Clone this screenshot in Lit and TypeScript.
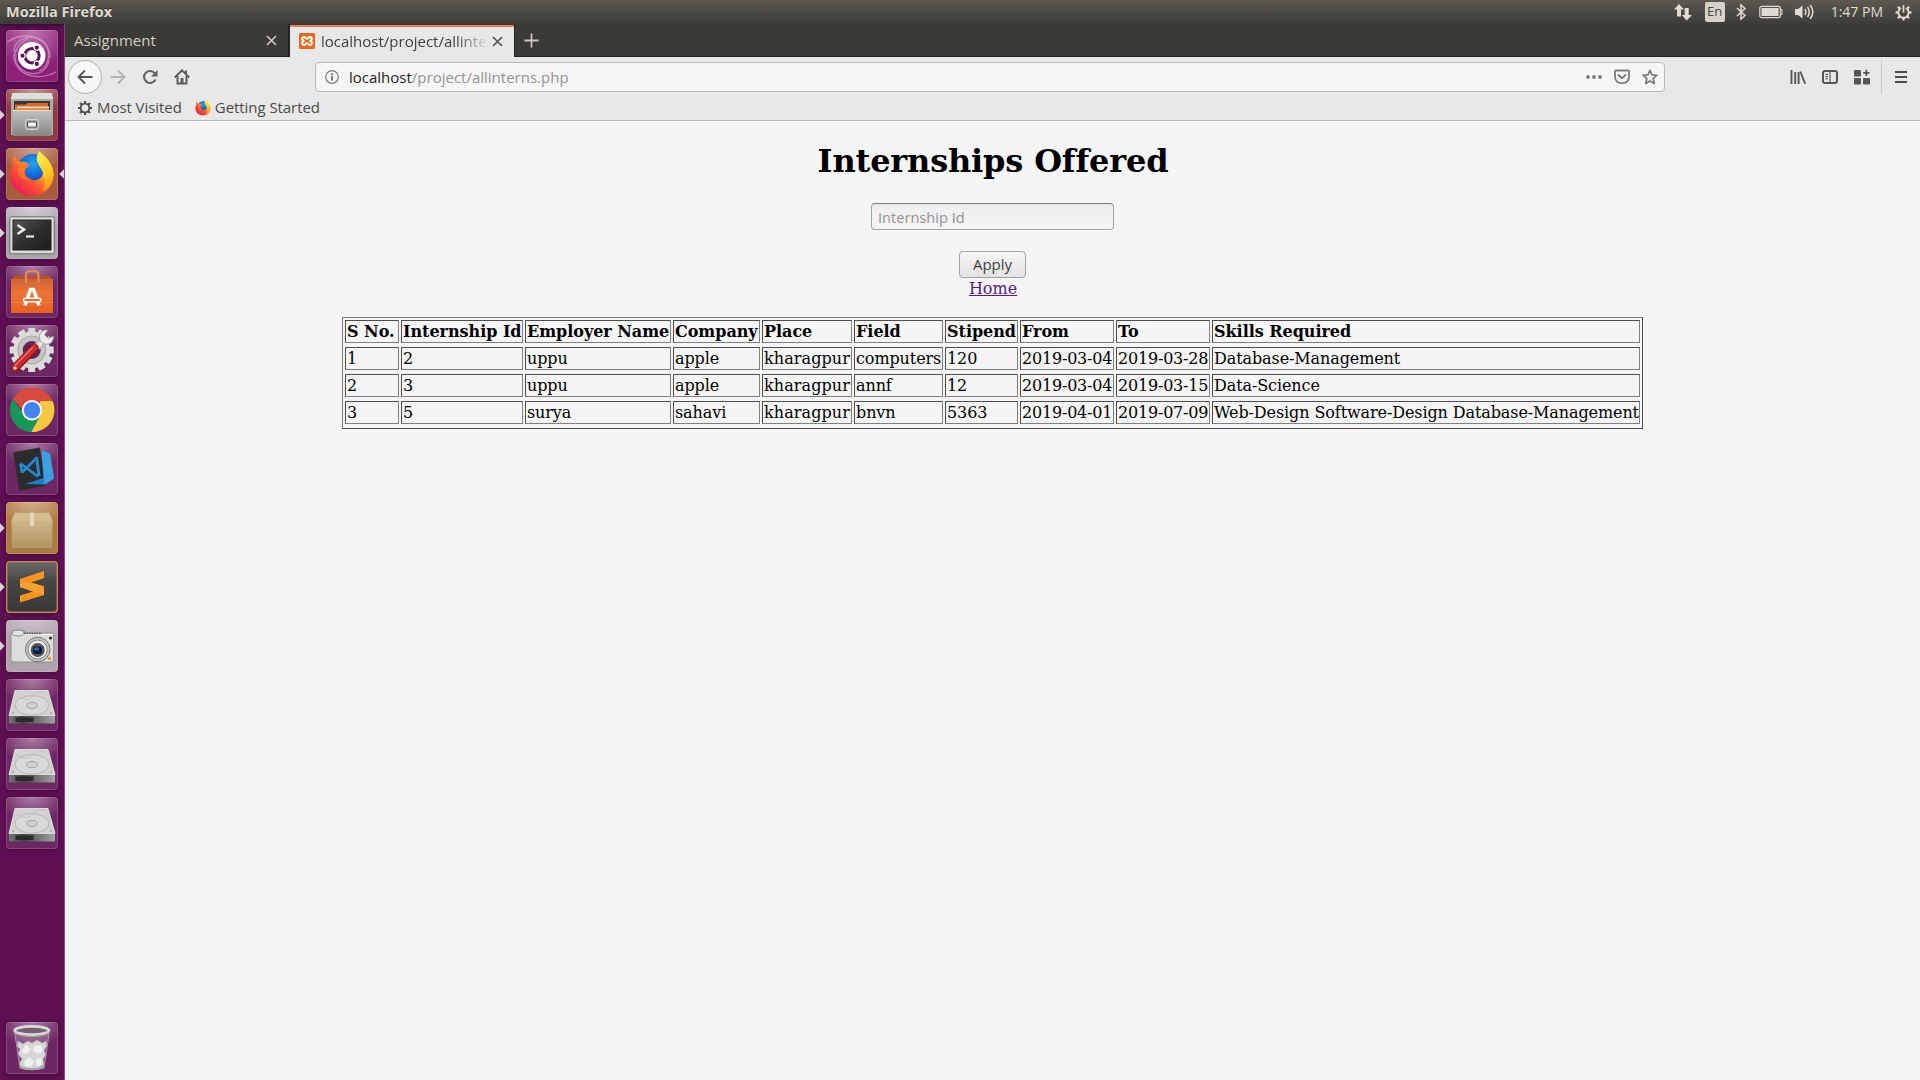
import { LitElement, html, css, svg } from "lit";
import { classMap } from "lit/directives/class-map.js";

const gearTeeth = (cx: number, cy: number, r: number, len: number, w: number, n: number, fill: string) =>
  Array.from({ length: n }, (_, i) => svg`<rect x=${cx - w / 2} y=${cy - r - len} width=${w} height=${len + 2} rx="0.6" fill=${fill} transform="rotate(${(360 / n) * i} ${cx} ${cy})"/>`);

const foxLogo = svg`
  <defs>
    <linearGradient id="fx-a" x1="0.85" y1="0.1" x2="0.15" y2="0.9"><stop offset="0" stop-color="#fff04a"/><stop offset="0.35" stop-color="#ffb01e"/><stop offset="0.6" stop-color="#ff5a2e"/><stop offset="1" stop-color="#ed1a55"/></linearGradient>
    <radialGradient id="fx-b" cx="0.5" cy="0.3" r="0.7"><stop offset="0" stop-color="#1fa5f5"/><stop offset="0.6" stop-color="#1160d8"/><stop offset="1" stop-color="#2b2a86"/></radialGradient>
    <linearGradient id="fx-c" x1="0" y1="0" x2="0.3" y2="1"><stop offset="0" stop-color="#fff458"/><stop offset="0.7" stop-color="#ffc823"/><stop offset="1" stop-color="#ff9a1f"/></linearGradient>
  </defs>
  <circle cx="27" cy="22" r="16" fill="url(#fx-b)"/>
  <path d="M8 8 C10 10 11 13 15 14 C19 13 20 15 23 16.500 C23 19 20 20 19 22 C18 25 19 29 24 31 C30 34 36 31 37 25 C38 18 34 14 31 11 L33 4 C38 9 47 15 47.5 27 C47 40 38 47.5 26 47.5 C14 47.5 4.5 40 4 27 C4 22 5 20 7 17 C6 14 6.500 10 8 8Z" fill="url(#fx-a)"/>
  <path d="M33 3 C40 9 48 16 47.500 27 C47 35 42 41 36 43 C40 37 39 32 38 28 C37 20 29 16 31 8Z" fill="url(#fx-c)"/>
  <path d="M12 19 C16 14 20 15.500 23 16.500 C23 19 20 20 19 22 C18 25 19 29 25 31 C20 34 14 30 12 25Z" fill="#ff7a25" opacity=".75"/>`;

const drive = svg`
  <path d="M9 11.500H42L49 36V43.500Q49 44.500 48 44.500H4Q3 44.500 3 43.500V36Z" fill="#3b3b39"/>
  <path d="M9 11.500H42L49 36.500H3Z" fill="#d2d2d0" stroke="#f0f0ee" stroke-width=".8"/>
  <path d="M3 37H49V43.500Q49 44.500 48 44.500H4Q3 44.500 3 43.500Z" fill="url(#dv)"/>
  <rect x="9.500" y="38.500" width="18" height="4.500" fill="#2b2b2a"/>
  <ellipse cx="26" cy="26.500" rx="17" ry="9.800" fill="#d9d9d7" stroke="#b2b2b0" stroke-width=".9"/>
  <ellipse cx="26" cy="26.500" rx="5.500" ry="3.200" fill="#cfcfcd" stroke="#a4a4a2"/>
  <path d="M10 17Q22 24 27 17T40 14" fill="none" stroke="#bcbcba" stroke-width=".8"/>
  <circle cx="7" cy="34" r=".8" fill="#888"/><circle cx="45" cy="34" r=".8" fill="#888"/>
  <defs><linearGradient id="dv"><stop offset="0" stop-color="#777"/><stop offset=".3" stop-color="#444"/><stop offset="1" stop-color="#a4a4a2"/></linearGradient></defs>`;

const art: Record<string, unknown> = {
  ubuntu: svg`
    <g fill="none" stroke="#e6b6dc" stroke-width="1.300" opacity=".55"><path d="M8 22C8 8 26 3 37 12C47 21 43 36 33 41"/><path d="M1 12C20 0 44 6 44 28"/><path d="M43 30C40 47 20 47 12 36C4 24 13 12 22 9"/><path d="M50 42C30 52 8 45 8 24"/></g>
    <circle cx="26" cy="26.500" r="14.500" fill="#47093d" opacity=".3"/>
    <circle cx="25.700" cy="25.700" r="13.800" fill="#fff"/>
    <circle cx="26" cy="25.700" r="7.200" fill="none" stroke="#5e1052" stroke-width="3"/>
    <g stroke="#fff" stroke-width="1.200" fill="#5e1052"><circle cx="16.500" cy="25.700" r="2.700"/><circle cx="30.800" cy="17.600" r="2.700"/><circle cx="30.800" cy="33.900" r="2.700"/></g>`,
  files: svg`
    <defs><linearGradient id="fl" x2="0" y2="1"><stop offset="0" stop-color="#c2c2c0"/><stop offset="1" stop-color="#858583"/></linearGradient></defs>
    <path d="M6 5Q6 4 7 4H45Q46 4 46.500 5L47 10V46H5V10Z" fill="#adadab"/><path d="M6.500 4H45.500L47 10H5Z" fill="#dededc"/>
    <rect x="8" y="12" width="36" height="10" fill="#353533"/>
    <path d="M9 15.500H20L21 14H42V22H9Z" fill="#d66a2a"/><rect x="11" y="17.500" width="32" height="1.500" fill="#f8dcc0"/><rect x="9" y="19" width="34" height="3" fill="#ef8a3c"/>
    <rect x="6.500" y="21" width="39" height="26" rx="1" fill="url(#fl)"/><path d="M7 21.500H45" stroke="#dcdcda"/>
    <rect x="19.500" y="30.500" width="13" height="10" rx="2" fill="#aaa" stroke="#d4d4d2"/><rect x="21.500" y="33" width="9" height="5" rx="1" fill="#fff" stroke="#4b4b49" stroke-width="1.200"/>`,
  firefox: foxLogo,
  terminal: svg`
    <defs><linearGradient id="tm" x1="0" y1="0" x2="1" y2="1"><stop offset="0" stop-color="#565654"/><stop offset=".5" stop-color="#2f2f2d"/><stop offset="1" stop-color="#1d1d1c"/></linearGradient></defs>
    <rect x="3.800" y="9.800" width="44.500" height="37" rx="1.500" fill="#dcdcda" stroke="#6a6a68"/><rect x="7" y="13" width="38" height="30" fill="url(#tm)" stroke="#222"/>
    <path d="M11.500 18L18 22.500L11.500 27" fill="none" stroke="#e8e8e6" stroke-width="2.600"/><path d="M20 29.500H28" stroke="#e8e8e6" stroke-width="2.200"/>`,
  software: svg`
    <defs><linearGradient id="sw" x2="0" y2="1"><stop offset="0" stop-color="#ce6332"/><stop offset=".4" stop-color="#ee7438"/><stop offset="1" stop-color="#e66220"/></linearGradient></defs>
    <path d="M9 9.500H43L47 14H5Z" fill="#b4542c"/><rect x="5" y="13" width="42" height="34" fill="url(#sw)"/>
    <path d="M20 17V9Q20 5.200 24 5.200H28.500Q32.500 5.200 32.500 9V17" fill="none" stroke="#dd8861" stroke-width="2.300"/>
    <path d="M5 36.500H47" stroke="#ef8b5a" stroke-width=".7"/>
    <g fill="none" stroke="#fff" stroke-width="3.600"><path d="M19 39.500L24.500 23.500H27.500L33 39.500"/></g><rect x="17.500" y="32.300" width="17.500" height="3.400" rx="1.700" fill="#e96c2c" stroke="#fff" stroke-width="1.500"/>`,
  settings: svg`
    ${gearTeeth(25.7, 25, 17.5, 4.5, 7, 12, "#dcdcda")}<circle cx="25.700" cy="25" r="18.500" fill="#dcdcda"/><circle cx="25.700" cy="25" r="14" fill="#c5c5c3" stroke="#a4a4a2"/><circle cx="25.700" cy="25" r="9" fill="#5f2357"/>
    <path d="M31 22L40 13" stroke="#b9b9b7" stroke-width="8"/><path d="M30 23L39 14" stroke="#ececea" stroke-width="4"/>
    <path d="M35 17C31 11 35 4 42 5L38.500 9.500L42 13.500L47.500 11C48 18 41 22 35 17Z" fill="#ededeb" stroke="#8f8f8d" stroke-width=".8"/>
    <path d="M9 43L28.500 23" stroke="#8c1515" stroke-width="8.500" stroke-linecap="round"/><path d="M9 42.500L28.500 22.500" stroke="#c92b2b" stroke-width="6.500" stroke-linecap="round"/><path d="M9 40.500L27 22" stroke="#ef7474" stroke-width="1.300"/><circle cx="9" cy="43" r="1.600" fill="#f5e8e8"/>`,
  chrome: svg`
    <path d="M26 26L6.900 15A22 22 0 0 1 45.100 15Z" fill="#d9493a"/><path d="M26 4A22 22 0 0 1 46.500 17H26L20 30L6.900 15A22 22 0 0 1 26 4Z" fill="#d84b3c"/>
    <path d="M46.500 17A22 22 0 0 1 25 48L34.500 31L34 17Z" fill="#f6c83e"/>
    <path d="M6.900 15A22 22 0 0 0 25 48L34 32L18 31Z" fill="#169658"/>
    <circle cx="26" cy="26.300" r="10.300" fill="#f4f4f4"/><circle cx="26" cy="26.300" r="8.200" fill="#4484ee"/>`,
  code: svg`
    <path d="M7.300 9.300L34 4.500L39 43L13.300 47.500Z" fill="#2c2c2e"/><path d="M35.500 7.500L44 10.500L48 35.500L38.500 41.500L19 41L37.500 35Z" fill="#1683cc"/><path d="M35.500 7.500L44 10.500L48 35.500L38.500 41.500Z" fill="#3ba0e0"/>
    <path d="M14.500 20.500L32 33.500M31 14.500L16 29.500M14.500 20.500L16 29.500" fill="none" stroke="#2389cf" stroke-width="2.800"/><path d="M30.500 14L33 33" stroke="#2389cf" stroke-width="3"/>`,
  archive: svg`
    <defs><linearGradient id="bx" x2="0" y2="1"><stop offset="0" stop-color="#cdb587"/><stop offset="1" stop-color="#b1945f"/></linearGradient></defs>
    <path d="M9 10.500H43L47 19.500V46.500Q47 47.500 46 47.500H6Q5 47.500 5 46.500V19.500Z" fill="#8c7040"/><path d="M9 10.500H43L47 19.500H5Z" fill="#d3bd90"/><rect x="5.500" y="19" width="41" height="27.500" fill="url(#bx)"/><path d="M24.500 10.500H27.500L28 24H24Z" fill="#e6dabb"/>`,
  sublime: svg`
    <defs><linearGradient id="sb" x2="0" y2="1"><stop offset="0" stop-color="#686868"/><stop offset=".4" stop-color="#444"/><stop offset="1" stop-color="#393939"/></linearGradient></defs>
    <rect x="1.500" y="1.500" width="49" height="49" rx="3" fill="url(#sb)"/><path d="M14 18L38 10V17L25 21.500L38 25.500V34L14 41.500V34.500L27 30.500L14 26Z" fill="#f8941e"/><path d="M14 26L27 30.500L38 34V25.500L25 21.500L14 22Z" fill="#f9a031"/>`,
  camera: svg`
    <rect x="9" y="10.500" width="10" height="5" rx="2.500" fill="#eee" stroke="#777" stroke-width=".8"/><rect x="5" y="13" width="42.500" height="29" rx="2.500" fill="#dcdcda" stroke="#878785" stroke-width=".8"/><path d="M6 14.500H47" stroke="#fff"/><path d="M18 13.500H36" stroke="#555" stroke-width="1.500" stroke-dasharray="1.500 1"/>
    <ellipse cx="12" cy="13" rx="6" ry="3" fill="#e5e5e3" stroke="#777" stroke-width=".8"/><circle cx="44.500" cy="18" r="1.500" fill="#222"/>
    <circle cx="31.700" cy="29.500" r="12.300" fill="#c4c4c2" stroke="#777" stroke-width="1"/><circle cx="31.700" cy="29.500" r="9.500" fill="#efefed" stroke="#888"/><circle cx="31.700" cy="30" r="7" fill="#555553"/><rect x="27" y="26.500" width="9" height="7.500" rx="2.500" fill="#0a1940"/><rect x="28" y="27.500" width="5" height="3" rx="1" fill="#3565a9"/><rect x="42" y="37" width="3" height="3" fill="#f29a1d"/>`,
  drive,
  trash: svg`
    <path d="M9 12H43L38 46Q26 50 14 46Z" fill="#c8b0c4" opacity=".3"/>
    <g fill="#d6d6d4" stroke="#a9a9a7" stroke-width=".5"><path d="M12 19L17 22L22 19L26 21L31 18L36 21L40 19L41 24L38 28L40 33L37 37L38 43L33 46L26 47L17 46L13 42L16 37L12 32L14 27L11 24Z"/><path d="M16 28L20 23L25 27L22 31L17 32ZM28 24L35 23L37 29L32 32L27 29ZM18 40L23 35L28 39L25 45L19 44ZM30 37L36 36L35 43L30 44Z" fill="#f0f0ee" stroke="none"/></g>
    <path d="M9 12L14 46Q26 49.500 38 46L43 12" fill="none" stroke="#aa95a7" stroke-width="1"/><path d="M14 45Q26 49.500 38 45" stroke="#a5a5a3" stroke-width="2" fill="none"/>
    <ellipse cx="25.800" cy="8.500" rx="17" ry="4.200" fill="#716070" stroke="#d9d9d7" stroke-width="2.800"/><path d="M8 11.500Q26 18 43.500 11.500" stroke="#9d9d9b" fill="none"/>`,
};

const launchers = [
  { art: "ubuntu", tone: "t-ubuntu" },
  { art: "files", tone: "t-files", run: true },
  { art: "firefox", tone: "t-firefox", run: true, focus: true },
  { art: "terminal", tone: "t-terminal", run: true },
  { art: "software", tone: "" },
  { art: "settings", tone: "" },
  { art: "chrome", tone: "" },
  { art: "code", tone: "" },
  { art: "archive", tone: "t-archive", run: true },
  { art: "sublime", tone: "t-sublime", run: true },
  { art: "camera", tone: "t-camera", run: true },
  { art: "drive", tone: "" },
  { art: "drive", tone: "" },
  { art: "drive", tone: "" },
  { art: "trash", tone: "", last: true },
];

class UnityLauncher extends LitElement {
  static styles = css`
    :host { display: flex; flex-direction: column; gap: 7px; box-sizing: border-box; padding: 6px 0 6px 0; background: linear-gradient(#3f0a37, #5e1052 5px, #5f1053); border-right: 1px solid #84457b; }
    .slot { display: flex; align-items: center; height: 52px; }
    .last { margin-top: auto; }
    .side { flex: none; width: 6px; height: 10px; }
    .tile { width: 52px; height: 52px; border-radius: 4px; box-sizing: border-box; background: radial-gradient(ellipse 34px 24px at 50% 0, #ad7da5, transparent), #6d2863; box-shadow: inset 0 0 0 1px #ffffff26, 0 1px 4px #30052a90; }
    .t-ubuntu { background: radial-gradient(circle at 50% 0, #bd77af, transparent 70%), #8d2078; }
    .t-files { background: radial-gradient(ellipse 38px 24px at 50% 0, #c89a9a, transparent), #8d3a41; }
    .t-firefox { background: radial-gradient(ellipse 38px 24px at 50% 0, #cfa18e, transparent), #a75c3c; }
    .t-terminal { background: radial-gradient(ellipse 38px 24px at 50% 0, #d8d4d8, transparent), #aba3aa; }
    .t-archive { background: radial-gradient(ellipse 38px 24px at 50% 0, #d2b18a, transparent), #b07a3e; }
    .t-sublime { background: #b8773a; }
    .t-camera { background: radial-gradient(ellipse 38px 24px at 50% 0, #cdc5cb, transparent), #afa3ac; }
    svg { display: block; }
  `;
  render() {
    return launchers.map((l) => html`
      <div class=${classMap({ slot: true, last: !!l.last })}>
        <svg class="side" viewBox="0 0 6 10">${l.run ? svg`<path d="M0 .3L4.800 5L0 9.700Z" fill="#dcd3da"/>` : ""}</svg>
        <div class="tile ${l.tone}"><svg width="52" height="52" viewBox="0 0 52 52">${art[l.art]}</svg></div>
        <svg class="side" viewBox="0 0 6 10">${l.focus ? svg`<path d="M6 .3L1.200 5L6 9.700Z" fill="#dcd3da"/>` : ""}</svg>
      </div>`);
  }
}
customElements.define("unity-launcher", UnityLauncher);

class SystemPanel extends LitElement {
  static styles = css`
    :host { display: flex; align-items: center; box-sizing: border-box; height: 24px; padding: 0 8px 0 6px; background: linear-gradient(#5b5950, #3d3c38); color: #dfdbd2; font: 15px "Open Sans", "Noto Sans", sans-serif; }
    .app { font-weight: 700; font-size: 14.500px; margin-right: auto; padding-bottom: 2px; text-shadow: 0 -1px #2c2b28; }
    .lang { width: 20px; height: 20px; border-radius: 2px; background: #d6d2c8; color: #45443f; font-size: 13px; line-height: 19px; text-align: center; margin: 0 10px 0 13px; }
    .clock { font-size: 14px; margin: 0 12px 0 16px; padding-bottom: 1px; }
    svg { display: block; }
    .bat { margin: 0 11px 0 12px; }
  `;
  render() {
    return html`
      <span class="app">Mozilla Firefox</span>
      <svg width="18" height="18" viewBox="0 0 18 18" fill="#dfdbd2"><path d="M5 1L10 6.500H7V13.500H3V6.500H0ZM12.700 17.500L18 12H14.700V5H10.700V12H7.700Z"/></svg>
      <div class="lang">En</div>
      <svg width="12" height="18" viewBox="0 0 12 18" fill="none" stroke="#dfdbd2" stroke-width="1.500"><path d="M2 5L10 12.500L6 16V2L10 5.500L2 13"/></svg>
      <svg class="bat" width="24" height="14" viewBox="0 0 24 14"><rect x=".8" y="1.300" width="20.500" height="11.400" rx="2" fill="none" stroke="#dfdbd2" stroke-width="1.200"/><rect x="2.500" y="3" width="17" height="8" fill="#dfdbd2"/><path d="M21.500 4.500H23V9.500H21.500" fill="none" stroke="#dfdbd2"/></svg>
      <svg width="21" height="18" viewBox="0 0 21 18"><path d="M1 6H4L8.500 2.500V15.500L4 12H1Z" fill="#dfdbd2"/><path d="M10.800 6Q13 9 10.800 12M13.500 4Q17 9 13.500 14M16.200 2Q21.500 9 16.200 16" fill="none" stroke="#dfdbd2" stroke-width="1.500"/></svg>
      <span class="clock">1:47 PM</span>
      <svg width="17" height="17" viewBox="0 0 17 17">${[45, 90, 135, 180, 225, 270, 315].map((a) => svg`<rect x="7.400" y=".5" width="2.200" height="3.500" fill="#dfdbd2" transform="rotate(${a} 8.500 8.500)"/>`)}<path d="M6 4A5.200 5.200 0 1 0 11 4" fill="none" stroke="#dfdbd2" stroke-width="1.900"/><path d="M8.500 1V8.500" stroke="#dfdbd2" stroke-width="1.700"/></svg>`;
  }
}
customElements.define("system-panel", SystemPanel);

const ico = (body: unknown, cls = "") => html`<svg class=${cls} width="16" height="16" viewBox="0 0 16 16">${body}</svg>`;

class BrowserChrome extends LitElement {
  static styles = css`
    :host { display: block; height: 97px; box-sizing: border-box; background: #e8e8e8; border-bottom: 1px solid #b9b9b9; color: #4b4b49; font: 15px "Open Sans", "Noto Sans", sans-serif; }
    svg { display: block; flex: none; }
    .tabs { display: flex; height: 33px; box-sizing: border-box; background: linear-gradient(#232220, #232220) 0 100% / 100% 1px no-repeat, #3b3a36; }
    .tab { display: flex; align-items: center; box-sizing: border-box; }
    .idle { width: 224px; padding: 1px 11px 0 9px; justify-content: space-between; color: #d2cec5; margin-bottom: 1px; border-right: 1px solid #232220; }
    .idle span { padding-bottom: 1px; }
    .live { width: 226px; padding: 0 11px 0 9px; background: #e8e8e8; border: 1px solid #232220; border-top-color: #3b3a36; border-bottom: 0; box-shadow: inset 0 2px #ef7c4e; color: #3e3e3c; }
    .live .name { flex: 1; width: 0; margin: 0 3px 0 6px; overflow: hidden; white-space: nowrap; -webkit-mask-image: linear-gradient(90deg, #000 80%, transparent); mask-image: linear-gradient(90deg, #000 80%, transparent); }
    .plus { align-self: center; margin-left: 9px; }
    .nav { display: flex; align-items: center; height: 40px; padding: 0 11px 0 3px; }
    .back { display: grid; place-items: center; width: 34px; height: 34px; box-sizing: border-box; border: 1px solid #aeaeac; border-radius: 50%; background: #f7f7f6; margin-right: 8px; }
    .gap16 { margin-right: 16px; }
    .url { display: flex; align-items: center; width: 1350px; height: 30px; box-sizing: border-box; margin-left: 125px; padding: 0 6px 0 9px; border: 1px solid #bdbbb7; border-radius: 4px; background: #f6f6f6; color: #949493; }
    .url b { font-weight: 400; color: #1f1f1e; }
    .addr { margin-left: 10px; margin-right: auto; }
    .url .act { margin-left: 12px; }
    .lib { margin-left: auto; }
    .rule { width: 1px; height: 34px; background: #c9c9c8; margin: 0 11px 0 11px; }
    .marks { display: flex; align-items: center; height: 22px; padding-left: 12px; }
    .marks span { margin: 0 13px 0 4px; padding-bottom: 2px; letter-spacing: -0.060px; }
  `;
  render() {
    const x = (c: string) => html`<svg width="11" height="11" viewBox="0 0 11 11"><path d="M1 1L10 10M10 1L1 10" stroke=${c} stroke-width="1.700"/></svg>`;
    return html`
      <div class="tabs">
        <div class="tab idle"><span>Assignment</span>${x("#c9c5bc")}</div>
        <div class="tab live">
          ${ico(svg`<rect width="16" height="16" rx="1.500" fill="#e8691f"/><path d="M5.500 8C2.500 8 2.500 4 5 4C7 4 6.500 5.800 8 5.800C9.500 5.800 9 4 11 4C13.500 4 13.500 8 10.500 8C13.500 8 13.500 12 11 12C9 12 9.500 10.200 8 10.200C6.500 10.200 7 12 5 12C2.500 12 2.500 8 5.500 8Z" fill="none" stroke="#fff" stroke-width="2"/>`)}
          <span class="name">localhost/project/allinterns.php</span>${x("#565654")}
        </div>
        <svg class="plus" width="15" height="15" viewBox="0 0 15 15"><path d="M7.500 .5V14.500M.5 7.500H14.500" stroke="#c9c5bc" stroke-width="1.800"/></svg>
      </div>
      <div class="nav">
        <div class="back">${ico(svg`<path d="M15.500 8H1.500M8 1.500L1.500 8L8 14.500" fill="none" stroke="#565654" stroke-width="1.900"/>`)}</div>
        ${ico(svg`<path d="M.5 8H14.500M8 1.500L14.500 8L8 14.500" fill="none" stroke="#b3b3b1" stroke-width="1.900"/>`, "gap16")}
        ${ico(svg`<path d="M13 4.500A6 6 0 1 0 13.500 10.500" fill="none" stroke="#626260" stroke-width="2.100"/><path d="M15.500 1V7.500H9Z" fill="#626260"/>`, "gap16")}
        ${ico(svg`<path d="M.8 8.500L8 1.300L15.200 8.500" fill="none" stroke="#5c5c5a" stroke-width="1.900"/><path d="M3.500 7V14.500H12.500V7" fill="none" stroke="#5c5c5a" stroke-width="2"/><path d="M6.500 9H9.500V14.500H6.500ZM11 1.500H13V5H11Z" fill="#5c5c5a"/>`)}
        <div class="url">
          <svg width="14" height="14" viewBox="0 0 14 14"><circle cx="7" cy="7" r="6.300" fill="none" stroke="#7c7c7a" stroke-width="1.200"/><path d="M7 6V10.500M7 3.200V4.900" stroke="#6a6a68" stroke-width="1.800"/></svg>
          <span class="addr"><b>localhost</b>/project/allinterns.php</span>
          ${ico(svg`<g fill="#7b7b79"><circle cx="2" cy="8" r="1.900"/><circle cx="8" cy="8" r="1.900"/><circle cx="14" cy="8" r="1.900"/></g>`)}
          ${ico(svg`<path d="M1 2Q1 1.500 1.600 1.500H14.400Q15 1.500 15 2.100V7Q15 14.200 8 14.200Q1 14.200 1 7Z" fill="none" stroke="#7b7b79" stroke-width="1.800"/><path d="M4.500 6L8 9.300L11.500 6" fill="none" stroke="#7b7b79" stroke-width="1.900" stroke-linecap="round"/>`, "act")}
          ${ico(svg`<path d="M8 1.300L10 5.800L14.900 6.300L11.200 9.500L12.300 14.500L8 11.900L3.700 14.500L4.800 9.500L1.100 6.300L6 5.800Z" fill="none" stroke="#7b7b79" stroke-width="1.700" stroke-linejoin="round"/>`, "act")}
        </div>
        ${ico(svg`<path d="M1.500 1V15M5.200 3V15M8.600 3V15" stroke="#565654" stroke-width="1.900"/><path d="M10.300 2.500L15.200 14.700" stroke="#565654" stroke-width="1.900"/>`, "lib gap16")}
        ${ico(svg`<rect x="1" y="2" width="14" height="12" rx="2" fill="none" stroke="#565654" stroke-width="2"/><path d="M8 2V14M3.500 5.300H6M3.500 7.600H6M3.500 9.900H5.500" stroke="#565654" stroke-width="1.200"/>`, "gap16")}
        ${ico(svg`<g fill="#565654"><rect x="0" y="1" width="7" height="6.500" rx="1"/><rect x="0" y="9" width="7" height="6.500" rx="1"/><rect x="9" y="9" width="7" height="6.500" rx="1"/></g><path d="M12.300 .8V7M9.200 3.900H15.500" stroke="#565654" stroke-width="1.700"/>`)}
        <div class="rule"></div>
        ${ico(svg`<path d="M2 3H14M2 8H14M2 13H14" stroke="#4b4b49" stroke-width="2"/>`)}
      </div>
      <div class="marks">
        ${ico(svg`${[0, 45, 90, 135, 180, 225, 270, 315].map((a) => svg`<rect x="7" y="1" width="2" height="3" fill="#4b4b49" transform="rotate(${a} 8 8)"/>`)}<circle cx="8" cy="8" r="4.300" fill="none" stroke="#4b4b49" stroke-width="1.800"/>`)}
        <span>Most Visited</span>
        <svg width="16" height="16" viewBox="3 3 46 46">${foxLogo}</svg>
        <span>Getting Started</span>
      </div>`;
  }
}
customElements.define("browser-chrome", BrowserChrome);

const heads = ["S No.", "Internship Id", "Employer Name", "Company", "Place", "Field", "Stipend", "From", "To", "Skills Required"];
const rows = [
  ["1", "2", "uppu", "apple", "kharagpur", "computers", "120", "2019-03-04", "2019-03-28", "Database-Management"],
  ["2", "3", "uppu", "apple", "kharagpur", "annf", "12", "2019-03-04", "2019-03-15", "Data-Science"],
  ["3", "5", "surya", "sahavi", "kharagpur", "bnvn", "5363", "2019-04-01", "2019-07-09", "Web-Design Software-Design Database-Management"],
];

class InternPage extends LitElement {
  static styles = css`
    :host { display: flex; flex-direction: column; align-items: center; background: #f5f5f5; color: #000; font: 16px/19px "DejaVu Serif", serif; }
    h1 { margin: 21px 0 23px; padding-left: 1px; font-size: 32px; line-height: 38px; font-weight: 700; letter-spacing: -0.160px; }
    input { width: 243px; height: 27px; box-sizing: border-box; padding: 0 6px; border: 1px solid #a5a5a4; border-top-color: #7e7e7d; border-radius: 4px; background: linear-gradient(#e6e6e6, #f0f0f0 5px, #f4f4f4); font: 14.600px "Open Sans", "Noto Sans", sans-serif; }
    input::placeholder { color: #949494; opacity: 1; }
    button { width: 67px; height: 27px; margin-top: 21px; box-sizing: border-box; padding: 0 0 2px; border: 1px solid #a2a2a0; border-radius: 4px; background: linear-gradient(#f6f6f5, #e4e3e1); color: #41413f; font: 15px "Open Sans", "Noto Sans", sans-serif; }
    a { color: #551a8b; text-decoration: underline; margin-top: 1px; padding-left: 1px; }
    .table { display: grid; grid-template-columns: 54px 122px 146px 87px 90px 89px 73px 94px 94px 428px; gap: 4px 2px; margin-top: 19px; padding: 2px 2px 4px; border: 1px solid; border-color: #808080 #4d4d4d #4d4d4d #808080; }
    .cell { height: 23px; box-sizing: border-box; padding: 1px; border: 1px solid; border-color: #4d4d4d #808080 #808080 #4d4d4d; white-space: nowrap; letter-spacing: -0.100px; }
    .date { letter-spacing: -0.200px; }
    .place { letter-spacing: 0.080px; }
    .head { font-weight: 700; letter-spacing: -0.030px; }
  `;
  render() {
    return html`
      <h1>Internships Offered</h1>
      <input placeholder="Internship Id" />
      <button>Apply</button>
      <a>Home</a>
      <div class="table">
        ${heads.map((h) => html`<div class="cell head">${h}</div>`)}
        ${rows.map((r) => r.map((c, i) => html`<div class=${classMap({ cell: true, place: i === 4, date: i === 7 || i === 8 })}>${c}</div>`))}
      </div>`;
  }
}
customElements.define("intern-page", InternPage);

class AppRoot extends LitElement {
  static styles = css`
    :host { display: grid; grid-template: 24px 97px 1fr / 65px 1fr; width: 1920px; height: 1080px; overflow: hidden; }
    system-panel { grid-column: 1 / -1; }
    unity-launcher { grid-row: 2 / -1; }
  `;
  render() {
    return html`<system-panel></system-panel><unity-launcher></unity-launcher><browser-chrome></browser-chrome><intern-page></intern-page>`;
  }
}
customElements.define("app-root", AppRoot);
